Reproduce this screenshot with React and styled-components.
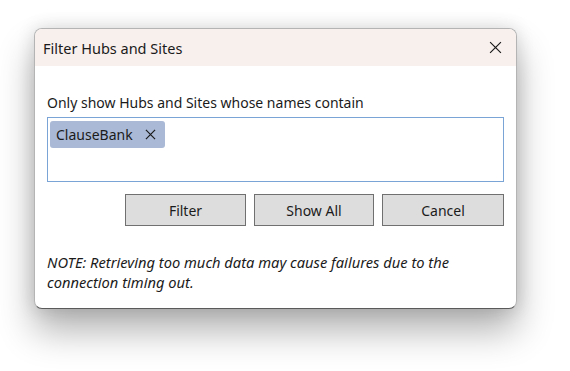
import React from "react";
import styled, { createGlobalStyle } from "styled-components";

const GlobalStyle = createGlobalStyle`
  html, body {
    margin: 0;
    padding: 0;
    background: #ffffff;
  }
  body {
    font-family: "Noto Sans", "Open Sans", sans-serif;
    color: #1b1b1b;
  }
`;

const Stage = styled.div`
  width: 570px;
  height: 371px;
  padding: 28px 0 0 34px;
  box-sizing: border-box;
  overflow: hidden;
`;

const Dialog = styled.div`
  width: 483px;
  height: 281px;
  box-sizing: border-box;
  border: 1px solid #b4b4b4;
  border-bottom-color: #5a5a5a;
  border-radius: 8px;
  background: #ffffff;
  overflow: hidden;
  display: flex;
  flex-direction: column;
  box-shadow: 0 22px 36px rgba(0, 0, 0, 0.3), 0 0 18px rgba(0, 0, 0, 0.14);
`;

const TitleBar = styled.div`
  height: 37px;
  flex: none;
  background: #f8f0ed;
  display: flex;
  align-items: center;
  justify-content: space-between;
  padding: 0 14px 0 8px;
  font-size: 14.5px;
`;

const CloseButton = styled.button`
  border: 0;
  background: transparent;
  padding: 0;
  width: 14px;
  height: 14px;
  display: flex;
  align-items: center;
  justify-content: center;
  color: #1b1b1b;
`;

const Body = styled.div`
  padding: 27px 12px 0 12px;
  display: flex;
  flex-direction: column;
`;

const Label = styled.div`
  font-size: 14px;
  line-height: 20px;
  margin-bottom: 4px;
`;

const TagBox = styled.div`
  height: 65px;
  box-sizing: border-box;
  border: 1px solid #7ba4d6;
  padding: 3px 2px;
  display: flex;
  align-items: flex-start;
  gap: 4px;
`;

const Tag = styled.span`
  height: 27px;
  box-sizing: border-box;
  display: inline-flex;
  align-items: center;
  gap: 12px;
  padding: 0 9px 0 6px;
  background: #aab9d6;
  border-radius: 3px;
  font-size: 14px;
`;

const ButtonRow = styled.div`
  display: flex;
  justify-content: flex-end;
  gap: 8px;
  margin-top: 12px;
`;

const Button = styled.button`
  width: ${({ $w }) => $w || 121}px;
  height: 32px;
  box-sizing: border-box;
  border: 1px solid #707070;
  background: #dddddd;
  font-family: inherit;
  font-size: 14px;
  color: #1b1b1b;
  padding: 0;
`;

const Note = styled.p`
  margin: 26px 0 0 0;
  font-size: 14.7px;
  font-style: italic;
  line-height: 20px;
  max-width: 430px;
`;

const Cross = ({ size, weight = 1.1 }) => (
  <svg width={size} height={size} viewBox="0 0 12 12" fill="none">
    <path d="M1 1 L11 11 M11 1 L1 11" stroke="currentColor" strokeWidth={weight} />
  </svg>
);

export default function App() {
  return (
    <Stage>
      <GlobalStyle />
      <Dialog>
        <TitleBar>
          <span>Filter Hubs and Sites</span>
          <CloseButton aria-label="Close">
            <Cross size={13} />
          </CloseButton>
        </TitleBar>
        <Body>
          <Label>Only show Hubs and Sites whose names contain</Label>
          <TagBox>
            <Tag>
              ClauseBank
              <Cross size={11} weight={1.3} />
            </Tag>
          </TagBox>
          <ButtonRow>
            <Button>Filter</Button>
            <Button $w={120}>Show All</Button>
            <Button $w={122}>Cancel</Button>
          </ButtonRow>
          <Note>
            NOTE: Retrieving too much data may cause failures due to the
            connection timing out.
          </Note>
        </Body>
      </Dialog>
    </Stage>
  );
}
